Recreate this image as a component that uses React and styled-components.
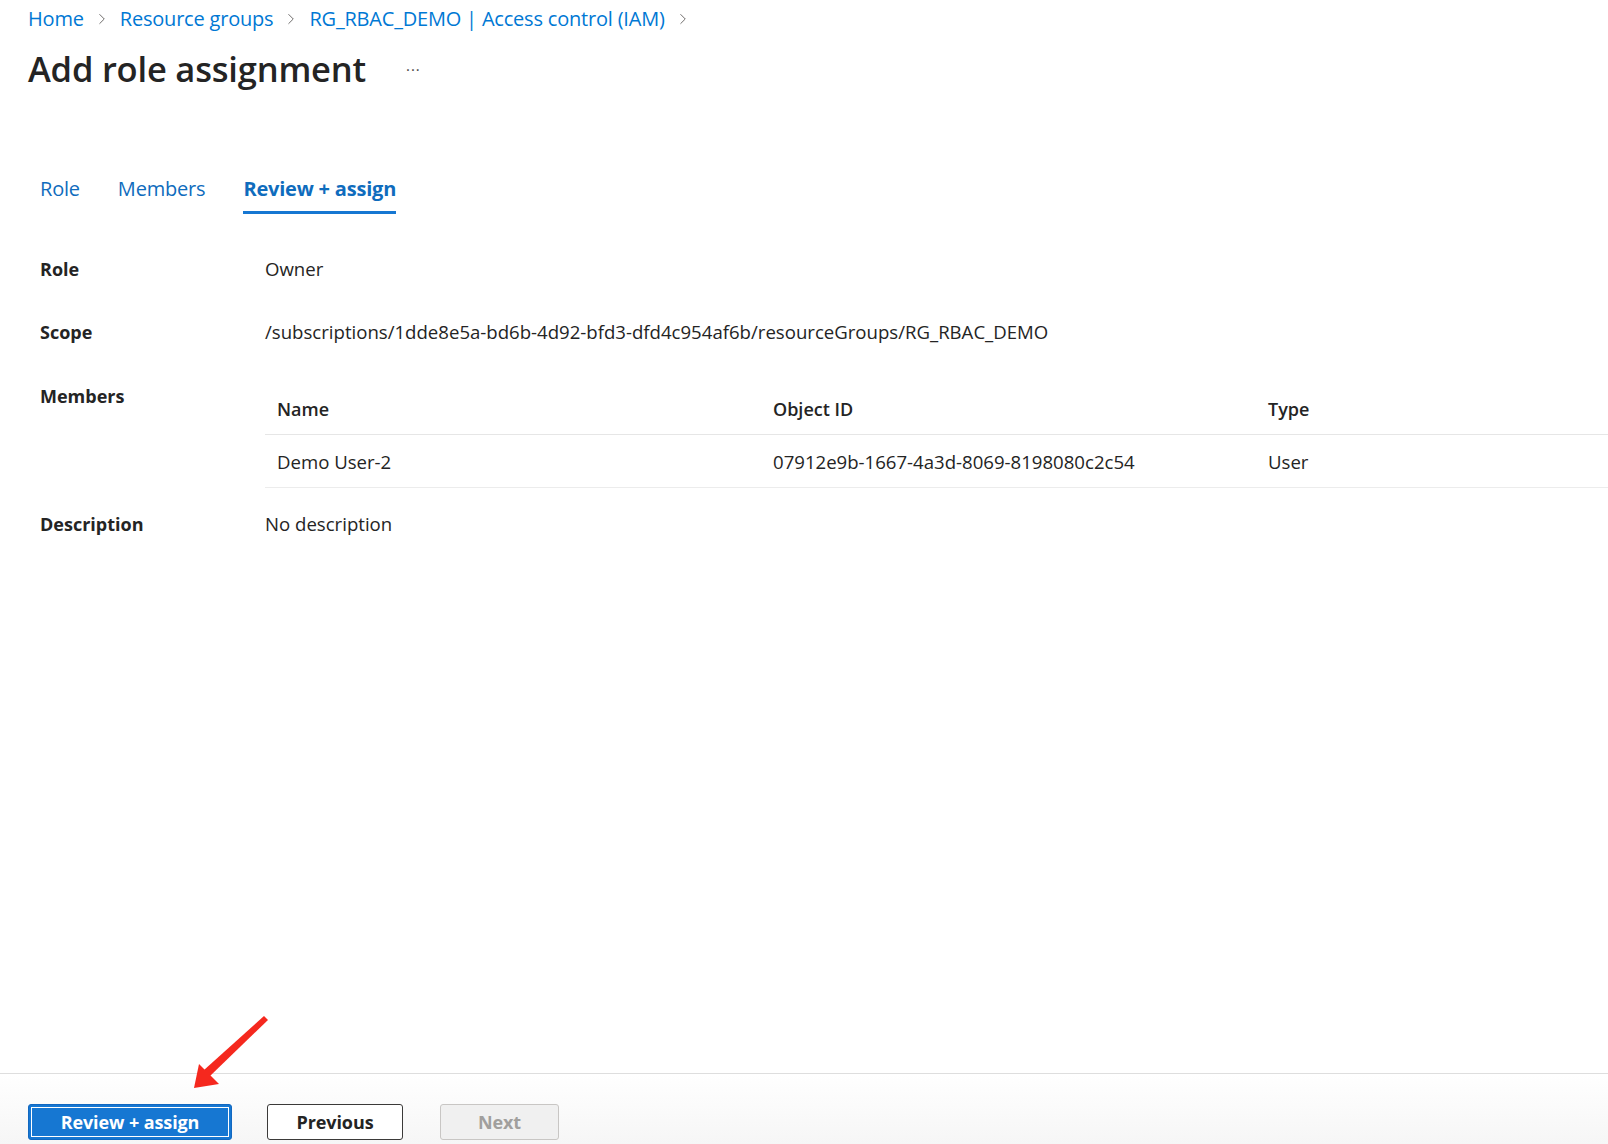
import styled, { createGlobalStyle } from 'styled-components'
import { ChevronRight } from 'lucide-react'

const GlobalStyle = createGlobalStyle`
  html, body {
    margin: 0;
    padding: 0;
    background: #fff;
  }
  body {
    font-family: 'Open Sans', 'Noto Sans', sans-serif;
    color: #242424;
  }
  * {
    box-sizing: border-box;
  }
`

const Page = styled.div`
  position: relative;
  min-height: 100vh;
  display: flex;
  flex-direction: column;
`

const Main = styled.main`
  flex: 1 0 auto;
  padding: 5px 0 0 28px;
`

const Breadcrumb = styled.nav`
  display: flex;
  align-items: center;
  gap: 9px;
  font-size: 20px;
  line-height: 28px;
  height: 28px;
  a {
    color: #0078d4;
    text-decoration: none;
    letter-spacing: -0.2px;
  }
  svg {
    color: #605e5c;
    flex: 0 0 auto;
  }
`

const TitleRow = styled.div`
  display: flex;
  align-items: center;
  margin-top: 13px;
  height: 46px;
`

const Title = styled.h1`
  margin: 0;
  font-size: 34.5px;
  line-height: 46px;
  font-weight: 600;
  color: #242424;
  letter-spacing: -0.2px;
`

const More = styled.span`
  margin-left: 40px;
  font-size: 15px;
  letter-spacing: 1px;
  color: #484644;
  line-height: 1;
`

const Tabs = styled.div`
  display: flex;
  gap: 38px;
  margin: 83px 0 0 12px;
`

const Tab = styled.span`
  display: inline-block;
  font-size: 20px;
  line-height: 28px;
  letter-spacing: -0.2px;
  padding-bottom: 8px;
  color: #0f6cbd;
  font-weight: ${p => (p.$active ? 700 : 400)};
  border-bottom: 3px solid ${p => (p.$active ? '#1677d2' : 'transparent')};
`

const Details = styled.section`
  margin: 43px 0 0 12px;
`

const Row = styled.div`
  display: grid;
  grid-template-columns: 225px 1fr;
  align-items: start;
  margin-bottom: ${p => p.$mb}px;
`

const Label = styled.div`
  font-size: 18px;
  line-height: 24px;
  font-weight: 700;
  color: #242424;
`

const Value = styled.div`
  font-size: 18.6px;
  line-height: 24px;
  color: #242424;
`

const Table = styled.table`
  width: 100%;
  border-collapse: collapse;
  margin-top: -1px;
  font-size: 18.6px;
  line-height: 24px;
  color: #242424;
  th {
    text-align: left;
    font-weight: 600;
    font-size: 18px;
    padding: 14px 12px 13px;
    border-bottom: 1px solid #e6e6e6;
  }
  td {
    padding: 15px 12px 13px;
    border-bottom: 1px solid #ececec;
  }
`

const Footer = styled.footer`
  flex: 0 0 71px;
  height: 71px;
  border-top: 1px solid #dedede;
  background: linear-gradient(#ffffff, #f6f6f6);
  padding: 30px 0 0 28px;
  display: flex;
  align-items: flex-start;
`

const Button = styled.button`
  height: 36px;
  width: ${p => p.$w}px;
  margin-right: ${p => p.$mr || 0}px;
  border-radius: 3px;
  font-family: 'Open Sans', sans-serif;
  font-size: 18px;
  font-weight: 700;
  letter-spacing: -0.1px;
  padding: 0;
  cursor: pointer;
`

const PrimaryButton = styled(Button)`
  background: #1677d2;
  color: #fff;
  border: 1px solid #1268c0;
  outline: 1px solid #ffffff;
  outline-offset: -4px;
`

const SecondaryButton = styled(Button)`
  background: #fff;
  color: #242424;
  border: 1px solid #3b3a39;
`

const DisabledButton = styled(Button)`
  background: #f0f0f0;
  color: #a19f9d;
  border: 1px solid #c8c6c4;
  cursor: default;
`

const Annotation = styled.svg`
  position: absolute;
  left: 180px;
  top: 1010px;
  pointer-events: none;
`

const members = [
  { name: 'Demo User-2', id: '07912e9b-1667-4a3d-8069-8198080c2c54', type: 'User' },
]

export default function App() {
  return (
    <Page>
      <GlobalStyle />
      <Main>
        <Breadcrumb>
          <a href="#">Home</a>
          <ChevronRight size={18} strokeWidth={1.2} />
          <a href="#">Resource groups</a>
          <ChevronRight size={18} strokeWidth={1.2} />
          <a href="#">RG_RBAC_DEMO | Access control (IAM)</a>
          <ChevronRight size={18} strokeWidth={1.2} />
        </Breadcrumb>
        <TitleRow>
          <Title>Add role assignment</Title>
          <More>···</More>
        </TitleRow>
        <Tabs>
          <Tab>Role</Tab>
          <Tab>Members</Tab>
          <Tab $active>Review + assign</Tab>
        </Tabs>
        <Details>
          <Row $mb={39}>
            <Label>Role</Label>
            <Value>Owner</Value>
          </Row>
          <Row $mb={40}>
            <Label>Scope</Label>
            <Value>/subscriptions/1dde8e5a-bd6b-4d92-bfd3-dfd4c954af6b/resourceGroups/RG_RBAC_DEMO</Value>
          </Row>
          <Row $mb={24}>
            <Label>Members</Label>
            <Table>
              <colgroup>
                <col style={{ width: 496 }} />
                <col style={{ width: 495 }} />
                <col />
              </colgroup>
              <thead>
                <tr>
                  <th>Name</th>
                  <th>Object ID</th>
                  <th>Type</th>
                </tr>
              </thead>
              <tbody>
                {members.map(m => (
                  <tr key={m.id}>
                    <td>{m.name}</td>
                    <td>{m.id}</td>
                    <td>{m.type}</td>
                  </tr>
                ))}
              </tbody>
            </Table>
          </Row>
          <Row $mb={0}>
            <Label>Description</Label>
            <Value>No description</Value>
          </Row>
        </Details>
      </Main>
      <Footer>
        <PrimaryButton $w={204} $mr={35}>Review + assign</PrimaryButton>
        <SecondaryButton $w={136} $mr={37}>Previous</SecondaryButton>
        <DisabledButton $w={119}>Next</DisabledButton>
      </Footer>
      <Annotation width="100" height="90" viewBox="0 0 100 90">
        <path d="M84 6 L88 10 L30 66 L24 60 Z" fill="#f5281e" />
        <polygon points="14,78 19,54 39,74" fill="#f5281e" />
      </Annotation>
    </Page>
  )
}
